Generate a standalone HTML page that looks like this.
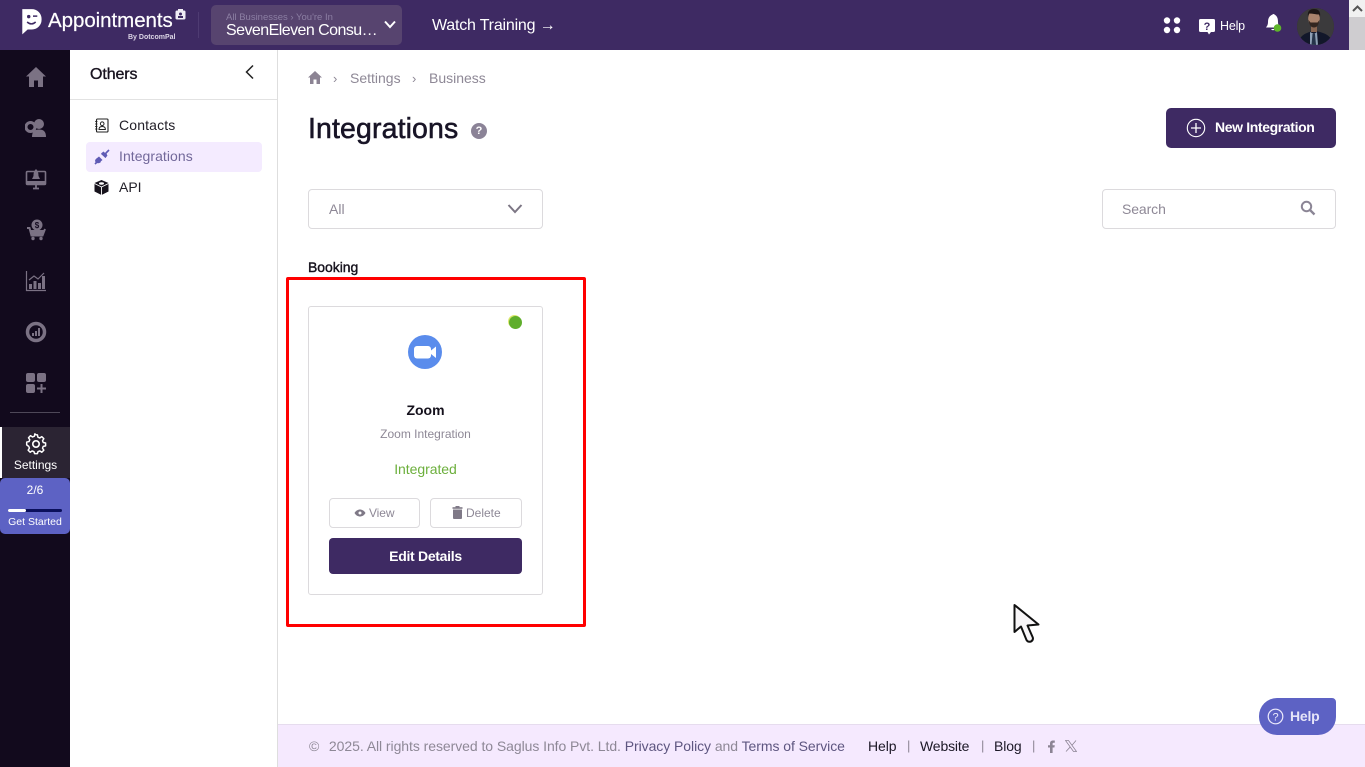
<!DOCTYPE html>
<html lang="en"><head><meta charset="utf-8"><title>Integrations</title>
<style>
*{box-sizing:border-box}
html,body{margin:0;padding:0;width:1365px;height:767px;overflow:hidden;background:#fff;font-family:"Liberation Sans",sans-serif}
.a{position:absolute}
.t{position:absolute;white-space:nowrap;line-height:1}
svg{position:absolute;display:block}
</style></head><body>
<!-- Top bar -->
<div class="a" style="left:0;top:0;width:1365px;height:50px;background:#3e2a63"></div>
<svg style="left:19px;top:7px" width="28" height="30" viewBox="0 0 26 28"><path d="M3 2h9a9 9 0 0 1 9 9v1a9 9 0 0 1-9 9H8l-5 4.500z" fill="#fff"/><circle cx="9" cy="9" r="1.600" fill="#3e2a63"/><path d="M13 8.500h4M7.500 14q4 3.500 8 0" stroke="#3e2a63" stroke-width="1.400" fill="none"/></svg>
<div class="t" style="left:48px;top:11px;font-size:20.500px;color:#fff;letter-spacing:-.05px;-webkit-text-stroke:.2px #fff">Appointments</div>
<svg style="left:175px;top:9px" width="11" height="11" viewBox="0 0 11 11"><rect x="0.500" y="1.500" width="10" height="9" rx="1.500" fill="#f0edf5"/><rect x="3" y="0" width="5" height="3" fill="#f0edf5"/><circle cx="5.500" cy="5" r="1.500" fill="#3e2a63"/><rect x="3" y="7" width="5" height="2" fill="#3e2a63"/></svg>
<div class="t" style="left:128px;top:34px;font-size:7px;font-weight:bold;color:#dcd6e6">By DotcomPal</div>
<div class="a" style="left:198px;top:12px;width:1px;height:26px;background:#4e3b72"></div>
<div class="a" style="left:211px;top:5px;width:191px;height:40px;border-radius:5px;background:#57446f"></div>
<div class="t" style="left:226px;top:13px;font-size:9.500px;color:#8c7fa3">All Businesses › You're In</div>
<div class="t" style="left:226px;top:23px;font-size:16px;color:#fff;letter-spacing:-.55px">SevenEleven Consu…</div>
<svg style="left:383px;top:19px" width="14" height="11" viewBox="0 0 14 11"><path d="M2 2.500 7 8l5-5.500" stroke="#fff" stroke-width="2" fill="none"/></svg>
<div class="t" style="left:432px;top:18px;font-size:16px;color:#fff;letter-spacing:-.2px">Watch Training →</div>
<svg style="left:1162px;top:16px" width="20" height="20" viewBox="0 0 20 20"><g fill="#fff"><circle cx="5" cy="4.500" r="3.200"/><circle cx="15" cy="4.500" r="3.200"/><circle cx="5" cy="14" r="3.200"/><circle cx="15" cy="14" r="3.200"/></g></svg>
<svg style="left:1198px;top:18px" width="19" height="18" viewBox="0 0 19 18"><path d="M2.500 1h13a1.500 1.500 0 0 1 1.500 1.500v10a1.500 1.500 0 0 1-1.500 1.500H13l-2 2.500L9.500 14h-7A1.500 1.500 0 0 1 1 12.500v-10A1.500 1.500 0 0 1 2.500 1z" fill="#fff"/><text x="9" y="12" font-size="11" font-weight="bold" text-anchor="middle" fill="#3e2a63" font-family="Liberation Sans">?</text></svg>
<div class="t" style="left:1220px;top:20px;font-size:12.500px;color:#fff;letter-spacing:-.2px">Help</div>
<svg style="left:1264px;top:13px" width="20" height="20" viewBox="0 0 20 20"><path d="M8.500 1.500a1.500 1.500 0 0 1 2 0C13 3 14 5 14 9c0 3 1 4 2 5.500H2C3 13 4 12 4 9c0-4 1.500-6 4.500-7.500z" fill="#fff"/><path d="M7 16h4q-2 2.500-4 0z" fill="#fff"/><circle cx="13.500" cy="15" r="3.800" fill="#5fb52b"/></svg>
<div class="a" style="left:1297px;top:8px;width:37px;height:37px;border-radius:50%;overflow:hidden;background:#2c2a2c">
<svg style="left:0;top:0" width="37" height="37" viewBox="0 0 37 37"><rect width="37" height="37" fill="#3b3a3c"/><path d="M1 37c1-10 8-12 15-14h3c8 2 16 4 17 14z" fill="#12172a"/><path d="M13 24l4 2 3-2 1 13h-8z" fill="#8fa0b5"/><path d="M15.500 26h2.500l1 11h-4.500z" fill="#26344a"/><rect x="14" y="15" width="6" height="9" fill="#8a6753"/><ellipse cx="17" cy="10.500" rx="5.800" ry="8" fill="#a9836c"/><path d="M11 9c-1-6 2-8 6-8s7 2 6 8l-1-2.500c-3 0-6-1-10-1z" fill="#1d1716"/><path d="M11.500 12c1 6 3 7.500 5.500 7.500s4.500-1.500 5.500-7.500l-2 2.500h-7z" fill="#332620"/></svg></div>
<!-- scrollbar -->
<div class="a" style="left:1349px;top:0;width:16px;height:50px;background:#cfcdd0"></div>
<div class="a" style="left:1349px;top:0;width:16px;height:17px;background:#f1f1f1"></div>
<svg style="left:1352px;top:4px" width="11" height="9" viewBox="0 0 11 9"><path d="M1 7 5.500 2.500 10 7" stroke="#555" stroke-width="2" fill="none"/></svg>

<!-- Left rail -->
<div class="a" style="left:0;top:50px;width:70px;height:717px;background:#120a1d"></div>
<svg style="left:25px;top:66px" width="22" height="22" viewBox="0 0 22 22"><path d="M11 1 1 10.500h3V21h5v-6.500h4V21h5V10.500h3z" fill="#7b7284"/></svg>
<svg style="left:25px;top:117px" width="22" height="22" viewBox="0 0 22 22"><circle cx="14" cy="7" r="5" fill="#7b7284"/><path d="M7 20c0-6 3-7.500 7-7.500s7 1.500 7 7.500z" fill="#7b7284"/><circle cx="5.500" cy="10" r="4.500" fill="none" stroke="#7b7284" stroke-width="3"/></svg>
<svg style="left:25px;top:168px" width="22" height="22" viewBox="0 0 22 22"><rect x="1.500" y="3.500" width="19" height="13" rx="1" fill="none" stroke="#7b7284" stroke-width="1.600"/><path d="M11 1c2 2 2.500 4 2.500 7l1.500 3H7l1.500-3C8.500 5 9 3 11 1z" fill="#7b7284"/><rect x="1" y="13" width="20" height="3" fill="#7b7284"/><path d="M8 20.500h6M11 16.500v4" stroke="#7b7284" stroke-width="1.800"/></svg>
<svg style="left:25px;top:219px" width="22" height="22" viewBox="0 0 22 22"><circle cx="12" cy="6" r="5.500" fill="#7b7284"/><text x="12" y="9" font-size="8" font-weight="bold" text-anchor="middle" fill="#140b20" font-family="Liberation Sans">$</text><path d="M2 9h2.500l2 7.500h11L20 10" fill="none" stroke="#7b7284" stroke-width="2"/><path d="M5 11h14l-2 5H6.500z" fill="#7b7284"/><circle cx="8" cy="19.500" r="1.700" fill="#7b7284"/><circle cx="16" cy="19.500" r="1.700" fill="#7b7284"/></svg>
<svg style="left:25px;top:270px" width="22" height="22" viewBox="0 0 22 22"><path d="M1.500 1v19.500H21" stroke="#7b7284" stroke-width="1.200" fill="none"/><g fill="#7b7284"><rect x="4" y="14" width="3" height="5"/><rect x="8.500" y="11" width="3" height="8"/><rect x="13" y="13" width="3" height="6"/><rect x="17" y="6" width="3" height="13"/></g><path d="M4 10 9 6l4 3 6-6" stroke="#7b7284" stroke-width="1.200" fill="none"/></svg>
<svg style="left:25px;top:321px" width="22" height="22" viewBox="0 0 22 22"><circle cx="11" cy="11" r="8.500" fill="none" stroke="#7b7284" stroke-width="3.500"/><g fill="#7b7284"><rect x="7" y="12" width="2" height="3"/><rect x="10" y="10" width="2" height="5"/><rect x="13" y="7" width="2" height="8"/></g></svg>
<svg style="left:25px;top:372px" width="22" height="22" viewBox="0 0 22 22"><g fill="#7b7284"><rect x="1" y="1" width="9" height="9" rx="2"/><rect x="12" y="1" width="9" height="9" rx="2"/><rect x="1" y="12" width="9" height="9" rx="2"/><path d="M15.500 12h2v3.500H21v2h-3.500V21h-2v-3.500H12v-2h3.500z"/></g></svg>
<div class="a" style="left:10px;top:412px;width:50px;height:1px;background:#4e4858"></div>
<div class="a" style="left:0;top:427px;width:70px;height:51px;background:#2b2433"></div>
<div class="a" style="left:0;top:427px;width:2px;height:51px;background:#fff"></div>
<svg style="left:25px;top:433px" width="22" height="22" viewBox="0 0 24 24"><path d="M12 1.500l1.800.1.600 2.900 2.200.9 2.500-1.600 2.500 2.500-1.600 2.500.9 2.200 2.900.6v3.500l-2.900.6-.9 2.200 1.600 2.500-2.500 2.500-2.500-1.600-2.200.9-.6 2.400h-3.600l-.6-2.400-2.200-.9-2.500 1.600-2.500-2.500 1.600-2.500-.9-2.200L.6 13.900v-3.500l2.900-.6.9-2.200-1.600-2.500 2.500-2.500 2.500 1.600 2.200-.9.600-2.900z" transform="translate(1.300 .6) scale(.89)" fill="none" stroke="#fff" stroke-width="1.800" stroke-linejoin="round"/><circle cx="12" cy="12" r="3.500" fill="none" stroke="#fff" stroke-width="1.800"/></svg>
<div class="t" style="left:0;width:71px;text-align:center;top:459px;font-size:12px;color:#fff">Settings</div>
<div class="a" style="left:0;top:478px;width:70px;height:56px;background:#5d62c4;border-radius:5px"></div>
<div class="t" style="left:0;width:70px;text-align:center;top:484px;font-size:12px;color:#fff">2/6</div>
<div class="a" style="left:8px;top:509px;width:54px;height:3px;background:#0a0f5c;border-radius:2px"></div>
<div class="a" style="left:8px;top:509px;width:18px;height:3px;background:#fff;border-radius:2px"></div>
<div class="t" style="left:0;width:70px;text-align:center;top:517px;font-size:10.500px;color:#fff">Get Started</div>

<!-- Secondary nav -->
<div class="a" style="left:277px;top:50px;width:1px;height:717px;background:#dedede"></div>
<div class="a" style="left:70px;top:99px;width:207px;height:1px;background:#e2e2e2"></div>
<div class="t" style="left:90px;top:67px;font-size:16px;color:#18131f;letter-spacing:-.1px;-webkit-text-stroke:.35px #18131f">Others</div>
<svg style="left:244px;top:64px" width="12" height="16" viewBox="0 0 12 16"><path d="M9 1.500 2.500 8 9 14.500" stroke="#222" stroke-width="1.500" fill="none"/></svg>
<svg style="left:95px;top:118px" width="14" height="15" viewBox="0 0 14 15"><rect x="1.500" y="1" width="11.500" height="13" rx="1" fill="none" stroke="#222" stroke-width="1.100"/><circle cx="7.200" cy="5.700" r="1.800" fill="none" stroke="#222"/><path d="M4 11.500c0-2.500 1.500-3 3.200-3s3.200.5 3.200 3z" fill="none" stroke="#222"/><path d="M0 3.500h2.500M0 6h2.500M0 8.500h2.500M0 11h2.500" stroke="#222" stroke-width=".8"/></svg>
<div class="t" style="left:119px;top:118px;font-size:14px;color:#232029;letter-spacing:.15px">Contacts</div>
<div class="a" style="left:86px;top:142px;width:176px;height:30px;background:#f4ebff;border-radius:4px"></div>
<svg style="left:94px;top:149px" width="16" height="16" viewBox="0 0 16 16"><path d="M1 15l3-3M15 1l-3 3" stroke="#5f5bb5" stroke-width="1.600"/><path d="M3 9l4 4-1.500 1c-1.500.5-3 .3-4-1-.8-1.300-.3-2.500.5-3zM9.500 2.500l4 4-2 2.500-4.500-4.500z" fill="#5f5bb5"/><path d="M5 7.500l3.500 3.500-2.500 2-3.500-3.500zM7 5l4.500-1.500 1.500 1.500L11.500 9z" fill="#5f5bb5"/></svg>
<div class="t" style="left:119px;top:149px;font-size:14px;color:#72689a;letter-spacing:.05px">Integrations</div>
<svg style="left:94px;top:180px" width="15" height="15" viewBox="0 0 15 15"><path d="M7.500 0 14.500 3v8.500L7.500 15 .5 11.500V3z" fill="#17131c"/><path d="M.5 3.500 7.500 7l7-3.500M7.500 7v8" stroke="#fff" stroke-width=".9" fill="none"/><ellipse cx="7.500" cy="3.500" rx="2.500" ry="1.200" fill="#fff"/></svg>
<div class="t" style="left:119px;top:180px;font-size:14px;color:#232029">API</div>

<!-- Breadcrumb -->
<svg style="left:308px;top:71px" width="14" height="13" viewBox="0 0 14 13"><path d="M7 0 0 6.500h2V13h3.500V8.500h3V13H12V6.500h2z" fill="#8c8494"/></svg>
<div class="t" style="left:333px;top:72px;font-size:13px;color:#8e8896">›</div>
<div class="t" style="left:350px;top:71px;font-size:14px;color:#8e8896">Settings</div>
<div class="t" style="left:412px;top:72px;font-size:13px;color:#8e8896">›</div>
<div class="t" style="left:429px;top:71px;font-size:14px;color:#8e8896">Business</div>

<div class="t" style="left:308px;top:115px;font-size:28.500px;color:#181426;letter-spacing:.12px;-webkit-text-stroke:.55px #181426">Integrations</div>
<div class="a" style="left:471px;top:123px;width:16px;height:16px;border-radius:50%;background:#8b8397;color:#fff;font-size:11px;font-weight:bold;line-height:16px;text-align:center">?</div>

<div class="a" style="left:1166px;top:108px;width:170px;height:40px;border-radius:5px;background:#3e2a63"></div>
<svg style="left:1186px;top:118px" width="20" height="20" viewBox="0 0 20 20"><circle cx="10" cy="10" r="8.700" fill="none" stroke="#fff" stroke-width="1.100"/><path d="M10 5v10M5 10h10" stroke="#fff" stroke-width="1.300"/></svg>
<div class="t" style="left:1215px;top:120px;font-size:14px;font-weight:bold;color:#fff;letter-spacing:-.37px">New Integration</div>

<div class="a" style="left:308px;top:189px;width:235px;height:40px;border:1px solid #dcdadd;border-radius:4px"></div>
<div class="t" style="left:329px;top:202px;font-size:14px;color:#8e8896">All</div>
<svg style="left:507px;top:203px" width="16" height="12" viewBox="0 0 16 12"><path d="M1.500 2 8 9l6.500-7" stroke="#7c7684" stroke-width="2" fill="none"/></svg>
<div class="a" style="left:1102px;top:189px;width:234px;height:40px;border:1px solid #dcdadd;border-radius:4px"></div>
<div class="t" style="left:1122px;top:202px;font-size:14px;color:#8e8896;letter-spacing:-.1px">Search</div>
<svg style="left:1300px;top:200px" width="16" height="16" viewBox="0 0 16 16"><circle cx="6.500" cy="6.500" r="4.700" fill="none" stroke="#8b8595" stroke-width="2"/><path d="M10 10l4.500 4.500" stroke="#8b8595" stroke-width="2.300"/></svg>

<div class="t" style="left:308px;top:260px;font-size:14px;color:#15111c;letter-spacing:-.05px;-webkit-text-stroke:.4px #15111c">Booking</div>

<!-- Red box -->
<div class="a" style="left:286px;top:277px;width:300px;height:350px;border:3px solid #f00;border-radius:2px"></div>

<!-- Card -->
<div class="a" style="left:308px;top:306px;width:235px;height:289px;border:1px solid #dcdadd;border-radius:3px"></div>
<div class="a" style="left:509px;top:316px;width:13px;height:13px;border-radius:50%;background:#5fae2c;box-shadow:-1px -1px 0 #dbe86a"></div>
<svg style="left:408px;top:335px" width="34" height="34" viewBox="0 0 34 34"><circle cx="17" cy="17" r="17" fill="#5a8cec"/><rect x="6" y="11" width="17" height="12.500" rx="3" fill="#fff"/><path d="M23 15.500l5-4v11.500l-5-4z" fill="#fff"/></svg>
<div class="t" style="left:308px;width:235px;text-align:center;top:403px;font-size:14px;font-weight:bold;color:#15111c">Zoom</div>
<div class="t" style="left:308px;width:235px;text-align:center;top:428px;font-size:12px;color:#8e8896">Zoom Integration</div>
<div class="t" style="left:308px;width:235px;text-align:center;top:462px;font-size:14px;color:#6caf3c;letter-spacing:-.05px">Integrated</div>
<div class="a" style="left:329px;top:498px;width:91px;height:30px;border:1px solid #dcdadd;border-radius:4px"></div>
<svg style="left:354px;top:509px" width="12" height="8" viewBox="0 0 12 8"><path d="M.5 4C2 1.500 4 .5 6 .5s4 1 5.500 3.500C10 6.500 8 7.500 6 7.500S2 6.500.5 4z" fill="#7f7987"/><circle cx="6" cy="4" r="1.500" fill="#fff"/></svg>
<div class="t" style="left:369px;top:507px;font-size:12px;color:#8e8896;letter-spacing:-.1px">View</div>
<div class="a" style="left:430px;top:498px;width:92px;height:30px;border:1px solid #dcdadd;border-radius:4px"></div>
<svg style="left:452px;top:506px" width="11" height="13" viewBox="0 0 11 13"><path d="M1 3.500h9V12a1 1 0 0 1-1 1H2a1 1 0 0 1-1-1z" fill="#7f7987"/><rect x="0.500" y="1.200" width="10" height="1.600" fill="#7f7987"/><rect x="3.500" y="0" width="4" height="1.500" fill="#7f7987"/></svg>
<div class="t" style="left:466px;top:507px;font-size:12px;color:#8e8896;letter-spacing:0">Delete</div>
<div class="a" style="left:329px;top:538px;width:193px;height:36px;background:#3e2a63;border-radius:4px"></div>
<div class="t" style="left:329px;width:193px;text-align:center;top:549px;font-size:14px;font-weight:bold;color:#fff;letter-spacing:-.3px">Edit Details</div>

<!-- Footer -->
<div class="a" style="left:278px;top:724px;width:1087px;height:43px;background:#f5e9fe;border-top:1px solid #e6dcee"></div>
<div class="t" style="left:309px;top:739px;font-size:14px;color:#8e8896;letter-spacing:-.06px"><span style="margin-right:2px">©</span>&nbsp; 2025. All rights reserved to Saglus Info Pvt. Ltd. <span style="color:#5e5680">Privacy Policy</span> and <span style="color:#5e5680">Terms of Service</span></div>
<div class="t" style="left:868px;top:739px;font-size:14px;color:#1c1826;letter-spacing:-.1px">Help</div>
<div class="t" style="left:907px;top:739px;font-size:13px;color:#8e8896">|</div>
<div class="t" style="left:920px;top:739px;font-size:14px;color:#1c1826;letter-spacing:-.15px">Website</div>
<div class="t" style="left:981px;top:739px;font-size:13px;color:#8e8896">|</div>
<div class="t" style="left:994px;top:739px;font-size:14px;color:#1c1826;letter-spacing:-.1px">Blog</div>
<div class="t" style="left:1032px;top:739px;font-size:13px;color:#8e8896">|</div>
<svg style="left:1047px;top:740px" width="9" height="13" viewBox="0 0 9 13"><path d="M3 13V7.500H1V5.300h2V3.500C3 1.500 4.200.5 6 .5h1.800v2.200H6.600c-.8 0-1 .4-1 1v1.600h2.200l-.4 2.200H5.600V13z" fill="#8c8494"/></svg>
<svg style="left:1065px;top:740px" width="12" height="12" viewBox="0 0 12 12"><path d="M.5.500h3L11.500 11.500h-3zM11 .5 7 5.200M5 7.200 1 11.500" fill="none" stroke="#8c8494" stroke-width=".8"/></svg>

<!-- Help pill -->
<div class="a" style="left:1259px;top:698px;width:77px;height:37px;background:#5d62c4;border-radius:18px 4px 18px 18px"></div>
<svg style="left:1267px;top:708px" width="17" height="17" viewBox="0 0 17 17"><circle cx="8.500" cy="8.500" r="7.300" fill="none" stroke="#eceafc" stroke-width="1.200"/><text x="8.500" y="12.500" font-size="11" text-anchor="middle" fill="#eceafc" font-family="Liberation Sans">?</text></svg>
<div class="t" style="left:1290px;top:709px;font-size:14px;font-weight:bold;color:#e6e5f8;letter-spacing:-.2px">Help</div>

<!-- Cursor -->
<svg style="left:1011px;top:602px" width="32" height="44" viewBox="0 0 32 44"><path d="M3.500 3 V30 L10 24.500 L15.500 38 Q17 40.500 20 39.500 Q22.500 38 21.800 35.500 L16.500 23.500 L27.500 22.500 Z" fill="#f8f6f8" stroke="#111" stroke-width="2" stroke-linejoin="round"/></svg>
</body></html>
